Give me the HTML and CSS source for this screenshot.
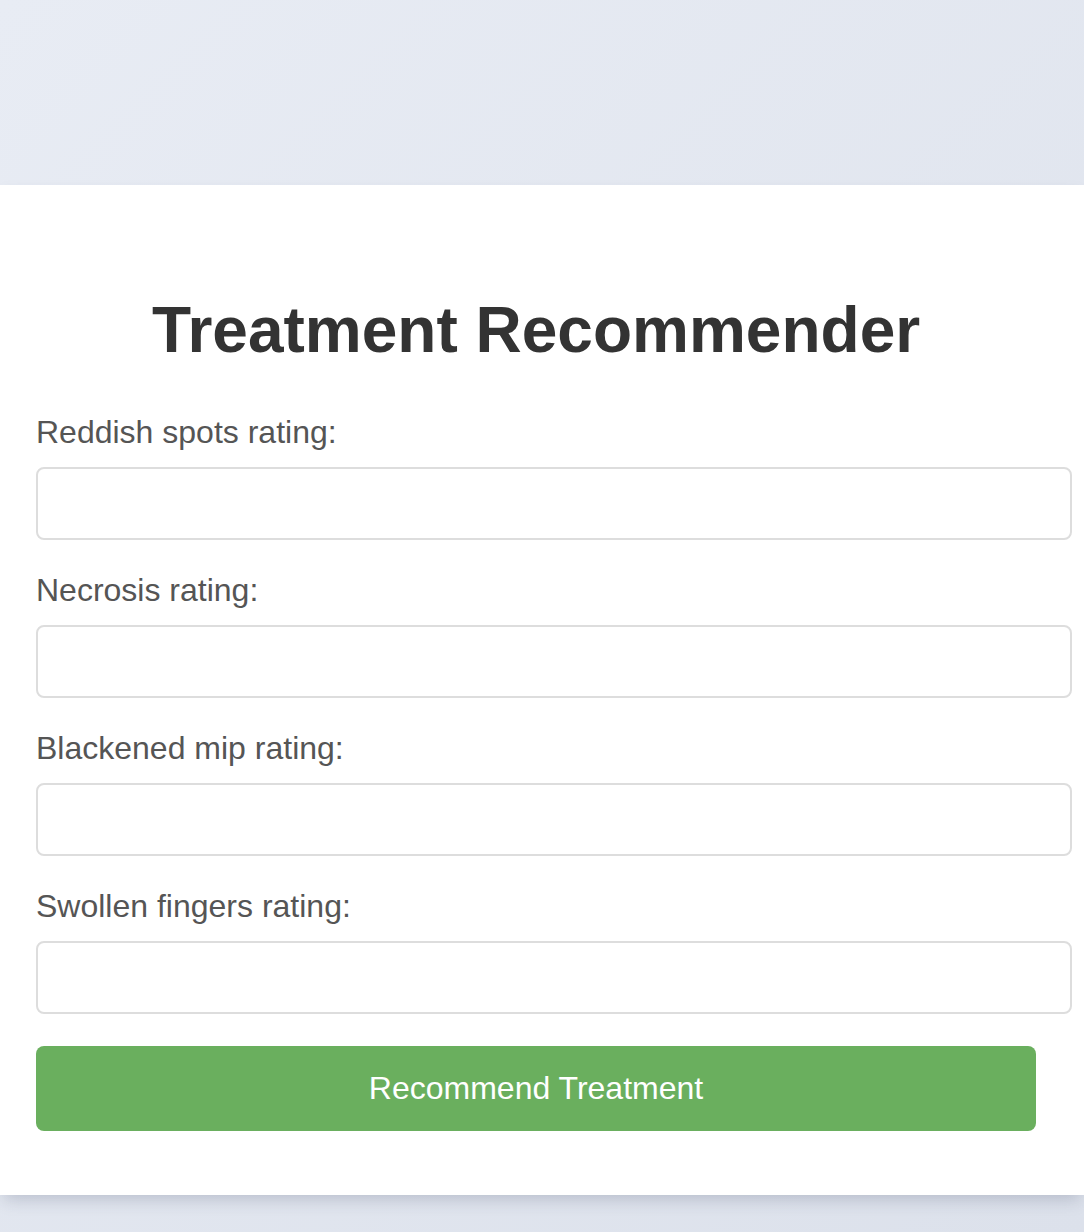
FILE: index.html
```html
<!DOCTYPE html>
<html lang="en">
<head>
<meta charset="utf-8">
<title>Treatment Recommender</title>
<link rel="stylesheet" href="styles.css">
</head>
<body>
<div class="page">
  <main class="card">
    <div class="inner">
      <h1 class="title">Treatment Recommender</h1>
      <form class="form">
        <label class="label" for="f1">Reddish spots rating:</label>
        <input class="field" id="f1" type="text">
        <label class="label" for="f2">Necrosis rating:</label>
        <input class="field" id="f2" type="text">
        <label class="label" for="f3">Blackened mip rating:</label>
        <input class="field" id="f3" type="text">
        <label class="label" for="f4">Swollen fingers rating:</label>
        <input class="field" id="f4" type="text">
        <button class="btn" type="button">Recommend Treatment</button>
      </form>
    </div>
  </main>
</div>
</body>
</html>
```

FILE: styles.css
```css
html, body {
  margin: 0;
  padding: 0;
}
body {
  min-height: 1232px;
  background: linear-gradient(135deg, #e8ecf4 0%, #dce1eb 100%);
  font-family: "Liberation Sans", Arial, sans-serif;
  overflow: hidden;
}
.page {
  padding-top: 185px;
}
.card {
  display: block;
  background: #ffffff;
  padding: 64px 0 64px 36px;
  box-shadow: 0 8px 16px -4px rgba(40, 50, 80, 0.22);
}
.inner {
  width: 1000px;
}
.title {
  margin: 44px 0 47px;
  font-size: 64px;
  font-weight: bold;
  color: #333333;
  text-align: center;
  line-height: normal;
}
.form {
  display: flex;
  flex-direction: column;
  align-items: flex-start;
}
.label {
  display: block;
  font-size: 32px;
  color: #555555;
  margin-bottom: 16px;
  line-height: normal;
}
.field {
  box-sizing: content-box;
  width: 1000px;
  padding: 16px;
  font-size: 32px;
  font-family: "Liberation Sans", Arial, sans-serif;
  border: 2px solid #dddddd;
  border-radius: 8px;
  margin: 0 0 32px;
  background: #ffffff;
  outline: none;
}
.btn {
  width: 1000px;
  padding: 24px;
  font-size: 32px;
  font-family: "Liberation Sans", Arial, sans-serif;
  color: #ffffff;
  background: #6aaf5e;
  border: none;
  border-radius: 8px;
  line-height: normal;
  cursor: pointer;
}
```
